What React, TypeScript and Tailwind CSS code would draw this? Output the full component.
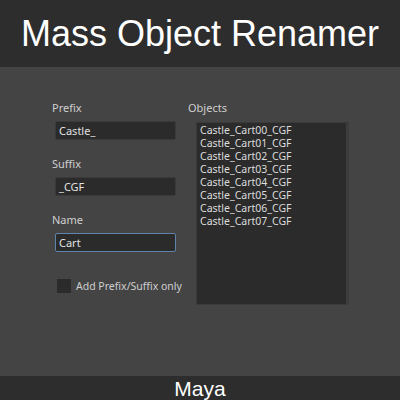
import React from 'react';

const objects = [
  'Castle_Cart00_CGF',
  'Castle_Cart01_CGF',
  'Castle_Cart02_CGF',
  'Castle_Cart03_CGF',
  'Castle_Cart04_CGF',
  'Castle_Cart05_CGF',
  'Castle_Cart06_CGF',
  'Castle_Cart07_CGF',
];

function Field({ label, value, focused }: { label: string; value: string; focused?: boolean }) {
  return (
    <div className="flex flex-col">
      <span className="text-[11px] leading-[14px] text-[#cfcfcf]">{label}</span>
      <div
        className={
          focused
            ? 'mt-[6px] ml-[3px] h-[19px] w-[121px] rounded-[2px] border border-[#5f83aa] bg-[#2b2b2b] px-[3px] text-[11px] leading-[17px] text-[#e0e0e0]'
            : 'mt-[6px] ml-[3px] h-[19px] w-[121px] rounded-[2px] border border-[#3a3a3a] bg-[#2b2b2b] px-[3px] text-[11px] leading-[17px] text-[#e0e0e0]'
        }
      >
        {value}
      </div>
    </div>
  );
}

export default function App() {
  return (
    <div className="flex h-[400px] w-[400px] flex-col bg-[#444444] font-['Noto_Sans',sans-serif]">
      <div className="flex h-[67px] items-center justify-center bg-[#2d2d2d]">
        <h1 className="font-['Liberation_Sans',Arial,sans-serif] text-[36px] leading-none text-white">
          Mass Object Renamer
        </h1>
      </div>

      <div className="flex flex-1 gap-[11px] pl-[52px] pt-[34px]">
        <div className="flex w-[125px] flex-col gap-[17px]">
          <Field label="Prefix" value="Castle_" />
          <Field label="Suffix" value="_CGF" />
          <Field label="Name" value="Cart" focused />
          <div className="mt-[10px] flex items-center gap-[5px] whitespace-nowrap pl-[5px]">
            <div className="h-[14px] w-[14px] shrink-0 bg-[#2b2b2b]" />
            <span className="text-[10.5px] leading-[14px] text-[#cfcfcf]">Add Prefix/Suffix only</span>
          </div>
        </div>

        <div className="flex flex-col">
          <span className="text-[11px] leading-[14px] text-[#cfcfcf]">Objects</span>
          <div className="ml-[8px] mt-[7px] h-[183px] w-[153px] border border-[#3a3a3a] border-r-[3px] border-r-[#3c3c3c] bg-[#2b2b2b] px-[3px] pt-[1px]">
            {objects.map((o) => (
              <div key={o} className="text-[10.5px] leading-[13px] text-[#dcdcdc]">
                {o}
              </div>
            ))}
          </div>
        </div>
      </div>

      <div className="flex h-[24px] items-center justify-center bg-[#2d2d2d]">
        <span className="font-['Liberation_Sans',Arial,sans-serif] text-[21px] leading-none text-white">Maya</span>
      </div>
    </div>
  );
}
